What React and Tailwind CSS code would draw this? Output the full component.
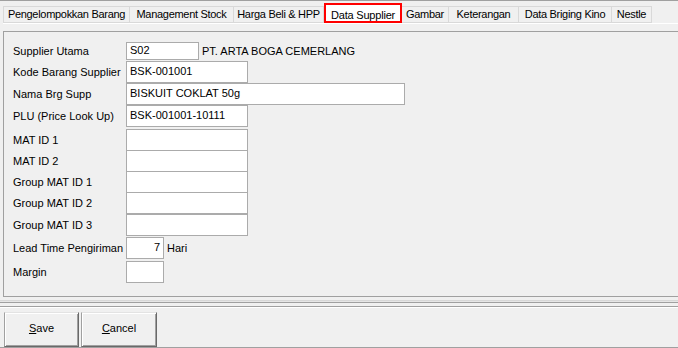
const tabs = [
  { label: "Pengelompokkan Barang", w: "w-[127px] border-l" },
  { label: "Management Stock", w: "w-[104px]" },
  { label: "Harga Beli & HPP", w: "w-[90px]" },
  { label: "Data Supplier", w: "w-[78px]", active: true },
  { label: "Gambar", w: "w-[47px]" },
  { label: "Keterangan", w: "w-[70px]" },
  { label: "Data Briging Kino", w: "w-[93px]" },
  { label: "Nestle", w: "w-[40px]" },
];

const rows = [
  { label: "Supplier Utama", value: "S02", box: "w-[73px] h-[18px] items-end", mt: "mt-0", after: "PT. ARTA BOGA CEMERLANG" },
  { label: "Kode Barang Supplier", value: "BSK-001001", box: "w-[122px] h-[22px] items-center", mt: "mt-px" },
  { label: "Nama Brg Supp", value: "BISKUIT COKLAT 50g", box: "w-[279px] h-[22px] items-center", mt: "mt-0" },
  { label: "PLU (Price Look Up)", value: "BSK-001001-10111", box: "w-[122px] h-[22px] items-center", mt: "mt-0" },
  { label: "MAT ID 1", value: "", box: "w-[122px] h-[22px] items-center", mt: "mt-[2px]" },
  { label: "MAT ID 2", value: "", box: "w-[122px] h-[22px] items-center", mt: "-mt-px" },
  { label: "Group MAT ID 1", value: "", box: "w-[122px] h-[22px] items-center", mt: "-mt-px" },
  { label: "Group MAT ID 2", value: "", box: "w-[122px] h-[22px] items-center", mt: "-mt-px" },
  { label: "Group MAT ID 3", value: "", box: "w-[122px] h-[22px] items-center", mt: "mt-0" },
  { label: "Lead Time Pengiriman", value: "7", box: "w-[38px] h-[22px] items-center justify-end", mt: "mt-px", after: "Hari" },
  { label: "Margin", value: "", box: "w-[38px] h-[22px] items-center", mt: "mt-[2px]" },
];

const App = () => {
  return (
    <div className="w-[678px] h-[348px] overflow-hidden bg-[#f0f0f0] text-black text-[11px] font-['Liberation_Sans',Arial,sans-serif] border-t border-[#a0a0a0]">
      {/* Tabs */}
      <div className="flex items-end h-[22px] pl-[3px]">
        {tabs.map((t) =>
          t.active ? (
            <div
              key={t.label}
              className={`${t.w} h-[20px] flex justify-center pt-[2px] bg-white border-2 border-[#ff0000] whitespace-nowrap tracking-[-0.2px]`}
            >
              {t.label}
            </div>
          ) : (
            <div
              key={t.label}
              className={`${t.w} h-[17px] flex items-center justify-center bg-[#f0f0f0] border-t border-b border-r border-[#d9d9d9] whitespace-nowrap tracking-[-0.3px]`}
            >
              {t.label}
            </div>
          )
        )}
      </div>

      {/* Tab page */}
      <div className="ml-[3px] border-t border-white pt-[7px]">
        <div className="h-[266px] border border-r-0 border-[#a0a0a0] pl-[9px] pt-[10px]">
          {rows.map((r) => (
            <div key={r.label} className={`flex items-center ${r.mt}`}>
              <div className="w-[113px] shrink-0 whitespace-nowrap">{r.label}</div>
              <div className={`flex ${r.box} bg-white border border-[#ababab] px-[3px] pb-px`}>
                {r.value}
              </div>
              {r.after && <div className="ml-[3px] whitespace-nowrap">{r.after}</div>}
            </div>
          ))}
        </div>
      </div>

      {/* Separators */}
      <div className="h-[3px]" />
      <div className="h-px bg-[#d7d7d7]" />
      <div className="h-px bg-[#e6e6e6]" />
      <div className="h-px bg-[#a0a0a0]" />
      <div className="h-[3px]" />

      {/* Buttons */}
      <div className="h-[42px] border-t border-b border-[#a0a0a0] shadow-[inset_0_1px_0_#ffffff] pl-[4px] pt-[5px] flex gap-[2px]">
        <button className="w-[75px] h-[35px] flex justify-center pt-[7px] bg-[#f0f0f0] border border-t-[#e3e3e3] border-l-[#a0a0a0] border-r-[#696969] border-b-[#696969] shadow-[inset_1px_1px_0_#ffffff,inset_-1px_-1px_0_#a0a0a0]">
          <span>
            <span className="underline">S</span>ave
          </span>
        </button>
        <button className="w-[76px] h-[35px] flex justify-center pt-[7px] bg-[#f0f0f0] border border-t-[#e3e3e3] border-l-[#a0a0a0] border-r-[#696969] border-b-[#696969] shadow-[inset_1px_1px_0_#ffffff,inset_-1px_-1px_0_#a0a0a0]">
          <span>
            <span className="underline">C</span>ancel
          </span>
        </button>
      </div>
    </div>
  );
};

export default App;
